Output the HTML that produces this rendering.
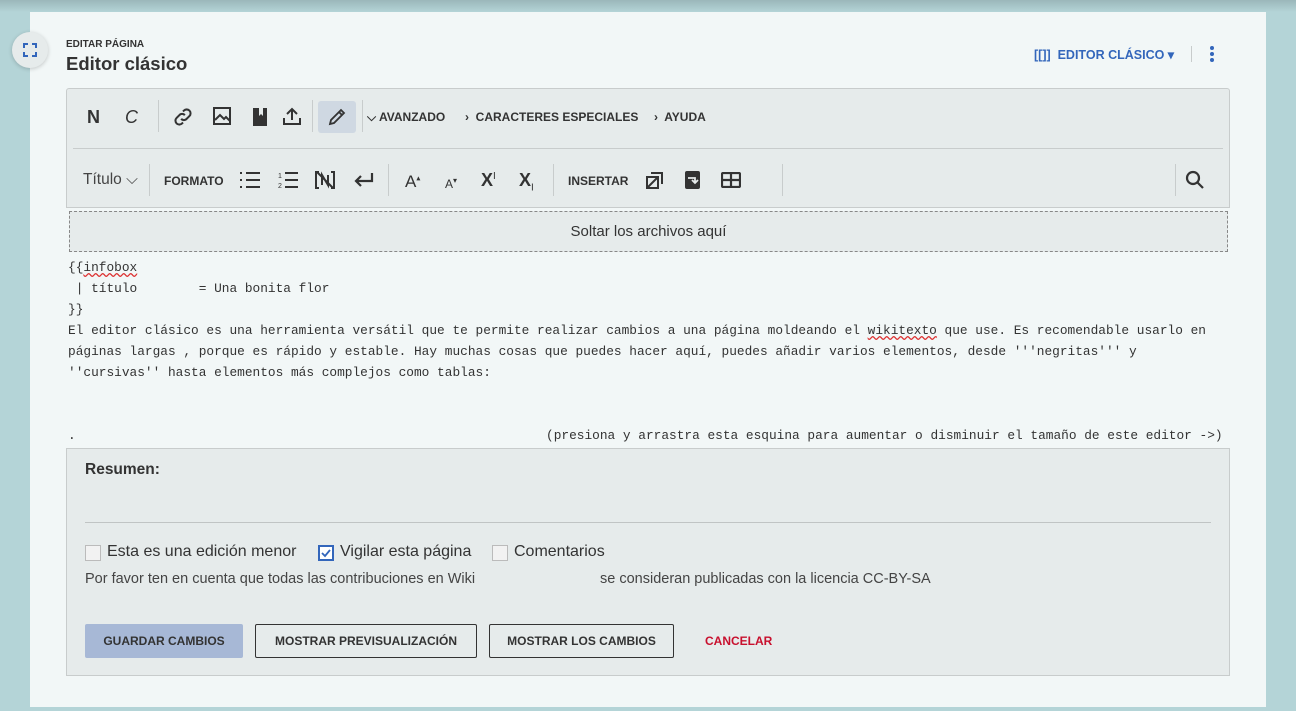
<!DOCTYPE html>
<html><head><meta charset="utf-8"><style>
*{box-sizing:border-box;margin:0;padding:0}
body{width:1296px;height:711px;background:#b4d4d7;font-family:"Liberation Sans",sans-serif;color:#333;position:relative;overflow:hidden}
.top{position:absolute;left:0;top:0;width:1296px;height:12px;background:linear-gradient(#9bb7ba,#b4d4d7)}
.card{position:absolute;left:30px;top:12px;width:1236px;height:695px;background:#f2f7f7}
.fs{position:absolute;left:12px;top:32px;width:36px;height:36px;border-radius:50%;background:#e6ebeb;box-shadow:0 1px 4px rgba(0,0,0,.2)}
.abs{position:absolute}
.tb{position:absolute;left:66px;top:88px;width:1164px;height:120px;background:#e6ebeb;border:1px solid #c8cccc;border-radius:3px 3px 0 0}
.sep{position:absolute;width:1px;background:#c8cccc}
.lbl{position:absolute;font-weight:bold;font-size:12px;color:#333}
.mono{font-family:"Liberation Mono",monospace;font-size:12.82px;color:#333;position:absolute;left:68px;white-space:pre;line-height:21px}
.btn{position:absolute;top:624px;height:34px;border:1px solid #333;border-radius:2px;font-size:12px;font-weight:bold;display:flex;align-items:center;justify-content:center;color:#333}
.cb{position:absolute;width:16px;height:16px;border:1px solid #bbb;background:#f2f2f2}
svg{position:absolute}
</style></head><body>
<div class="top"></div>
<div class="card"></div>
<div class="fs"><svg width="36" height="36" viewBox="0 0 36 36" fill="none" stroke="#3366bb" stroke-width="2"><path d="M12 16v-4h4M20 12h4v4M24 20v4h-4M16 24h-4v-4"/></svg></div>
<div class="abs" style="left:66px;top:39px;font-size:10px;font-weight:bold;color:#333">EDITAR PÁGINA</div>
<div class="abs" style="left:66px;top:53px;font-size:18.5px;font-weight:bold;color:#333">Editor clásico</div>
<div class="abs" style="left:1034px;top:47px;font-size:12.5px;font-weight:bold;color:#3366bb">[[]]&nbsp; EDITOR CLÁSICO ▾</div>
<div class="sep" style="left:1191px;top:46px;height:16px"></div>
<svg style="left:1208px;top:45px" width="8" height="18"><circle cx="4" cy="3" r="2" fill="#3366bb"/><circle cx="4" cy="9" r="2" fill="#3366bb"/><circle cx="4" cy="15" r="2" fill="#3366bb"/></svg>

<div class="tb"></div>
<div class="abs" style="left:73px;top:148px;width:1150px;height:1px;background:#c8cccc"></div>
<div class="abs" style="left:87px;top:107px;font-size:18px;font-weight:bold">N</div>
<div class="abs" style="left:125px;top:107px;font-size:18px;font-style:italic">C</div>
<div class="sep" style="left:158px;top:100px;height:32px"></div>
<svg style="left:172px;top:106px" width="22" height="22" viewBox="0 0 24 24" fill="none" stroke="#333" stroke-width="2.2"><path d="M10 14a4 4 0 0 0 6 0l3-3a4 4 0 0 0-6-6l-1 1M14 10a4 4 0 0 0-6 0l-3 3a4 4 0 0 0 6 6l1-1"/></svg>
<svg style="left:212px;top:106px" width="20" height="20" viewBox="0 0 20 20" fill="none" stroke="#333" stroke-width="2"><rect x="2" y="2" width="16" height="16"/><path d="M3 14l5-5 4 4 2-2 4 4"/></svg>
<svg style="left:252px;top:107px" width="16" height="20" viewBox="0 0 16 20"><path d="M1 1h6v8l2-2 2 2V1h4v18H1z" fill="#333"/></svg>
<svg style="left:282px;top:106px" width="20" height="20" viewBox="0 0 20 20" fill="none" stroke="#333" stroke-width="2"><path d="M10 14V3M5 8l5-5 5 5M2 12v6h16v-6"/></svg>
<div class="sep" style="left:312px;top:100px;height:32px"></div>
<div class="abs" style="left:318px;top:101px;width:38px;height:32px;background:#cfd8e2;border-radius:3px"></div>
<svg style="left:327px;top:107px" width="20" height="20" viewBox="0 0 20 20" fill="none" stroke="#333" stroke-width="1.8"><path d="M3 17l1-4L14 3l3 3L7 16zM12 5l3 3"/></svg>
<div class="sep" style="left:362px;top:100px;height:32px"></div>
<div class="lbl" style="left:367px;top:110px;font-size:12px">⌵ AVANZADO</div>
<div class="lbl" style="left:465px;top:110px;font-size:12px">›&nbsp; CARACTERES ESPECIALES</div>
<div class="lbl" style="left:654px;top:110px;font-size:12px">›&nbsp; AYUDA</div>

<div class="abs" style="left:83px;top:171px;font-size:15.5px;color:#444">Título ⌵</div>
<div class="sep" style="left:149px;top:164px;height:32px"></div>
<div class="lbl" style="left:164px;top:174px;font-size:12px">FORMATO</div>
<svg style="left:240px;top:171px" width="20" height="18" viewBox="0 0 20 18" stroke="#333" stroke-width="2"><path d="M6 2h14M6 9h14M6 16h14M0 2h2M0 9h2M0 16h2"/></svg>
<svg style="left:278px;top:170px" width="20" height="20" viewBox="0 0 20 20"><text x="0" y="8" font-size="7" fill="#333">1</text><text x="0" y="18" font-size="7" fill="#333">2</text><path d="M7 3h13M7 10h13M7 17h13" stroke="#333" stroke-width="2"/></svg>
<svg style="left:315px;top:170px" width="20" height="20" viewBox="0 0 20 20" fill="none" stroke="#333" stroke-width="2"><path d="M4 2H1v16h3M16 2h3v16h-3M7 15V5l6 10V5M2 2l16 16"/></svg>
<svg style="left:354px;top:172px" width="20" height="16" viewBox="0 0 20 16" fill="none" stroke="#333" stroke-width="2.2"><path d="M18 1v8H3M7 4L2 9l5 5"/></svg>
<div class="sep" style="left:388px;top:164px;height:32px"></div>
<div class="abs" style="left:405px;top:172px;font-size:17px">A<sup style="font-size:8px">▴</sup></div>
<div class="abs" style="left:445px;top:176px;font-size:12px">A<sup style="font-size:8px">▾</sup></div>
<div class="abs" style="left:481px;top:170px;font-size:18px;font-weight:bold">X<sup style="font-size:10px;font-weight:normal">I</sup></div>
<div class="abs" style="left:519px;top:170px;font-size:18px;font-weight:bold">X<sub style="font-size:10px;font-weight:normal">I</sub></div>
<div class="sep" style="left:553px;top:164px;height:32px"></div>
<div class="lbl" style="left:568px;top:174px;font-size:12px">INSERTAR</div>
<svg style="left:646px;top:171px" width="18" height="18" viewBox="0 0 18 18" fill="none" stroke="#333" stroke-width="2"><rect x="1" y="6" width="11" height="11"/><path d="M5 2h11v11M1 17L12 6"/></svg>
<svg style="left:685px;top:171px" width="15" height="18" viewBox="0 0 15 18"><rect width="15" height="18" rx="2" fill="#333"/><path d="M3 7h7v5M7 9l3 3 3-3" stroke="#e6ebeb" stroke-width="1.8" fill="none"/></svg>
<svg style="left:721px;top:172px" width="20" height="16" viewBox="0 0 20 16" fill="none" stroke="#333" stroke-width="2.2"><rect x="1" y="1" width="18" height="14" rx="1"/><path d="M1 8h18M10 1v14"/></svg>
<div class="sep" style="left:782px;top:164px;height:32px"></div>
<div class="sep" style="left:1175px;top:164px;height:32px"></div>
<svg style="left:1185px;top:170px" width="20" height="20" viewBox="0 0 20 20" fill="none" stroke="#333" stroke-width="2.2"><circle cx="8" cy="8" r="6"/><path d="M12.5 12.5L18 18"/></svg>

<div class="abs" style="left:69px;top:211px;width:1159px;height:41px;background:#e6ebeb;border:1px dashed #888;display:flex;align-items:center;justify-content:center;font-size:15px;color:#333">Soltar los archivos aquí</div>

<div class="mono" style="top:257px">{{<span style="text-decoration:underline wavy #d33">infobox</span>
 | título        = Una bonita flor
}}
El editor clásico es una herramienta versátil que te permite realizar cambios a una página moldeando el <span style="text-decoration:underline wavy #d33">wikitexto</span> que use. Es recomendable usarlo en
páginas largas , porque es rápido y estable. Hay muchas cosas que puedes hacer aquí, puedes añadir varios elementos, desde '''negritas''' y
''cursivas'' hasta elementos más complejos como tablas:</div>
<div class="mono" style="top:425px">.</div>
<div class="mono" style="top:425px;left:546px">(presiona y arrastra esta esquina para aumentar o disminuir el tamaño de este editor ->)</div>

<div class="abs" style="left:66px;top:448px;width:1164px;height:228px;background:#e6ebeb;border:1px solid #c8cccc"></div>
<div class="abs" style="left:85px;top:461px;font-size:15.5px;font-weight:bold">Resumen:</div>
<div class="abs" style="left:85px;top:522px;width:1126px;height:1px;background:#c0c4c4"></div>
<div class="cb" style="left:85px;top:545px"></div>
<div class="abs" style="left:107px;top:543px;font-size:16px;color:#333">Esta es una edición menor</div>
<div class="cb" style="left:318px;top:545px;border:2px solid #3366bb;background:#fff"></div>
<svg style="left:320px;top:547px" width="12" height="12"><path d="M2 6l3 3 5-6" stroke="#3366bb" stroke-width="1.8" fill="none"/></svg>
<div class="abs" style="left:340px;top:543px;font-size:16px">Vigilar esta página</div>
<div class="cb" style="left:492px;top:545px"></div>
<div class="abs" style="left:514px;top:543px;font-size:16px">Comentarios</div>
<div class="abs" style="left:85px;top:571px;font-size:14.5px;color:#444">Por favor ten en cuenta que todas las contribuciones en Wiki</div>
<div class="abs" style="left:600px;top:571px;font-size:14.5px;color:#444">se consideran publicadas con la licencia CC-BY-SA</div>
<div class="btn" style="left:85px;width:158px;background:#a7b8d6;border-color:#a7b8d6">GUARDAR CAMBIOS</div>
<div class="btn" style="left:255px;width:222px">MOSTRAR PREVISUALIZACIÓN</div>
<div class="btn" style="left:489px;width:185px">MOSTRAR LOS CAMBIOS</div>
<div class="abs" style="left:705px;top:634px;font-size:12px;font-weight:bold;color:#c8102e">CANCELAR</div>
</body></html>
